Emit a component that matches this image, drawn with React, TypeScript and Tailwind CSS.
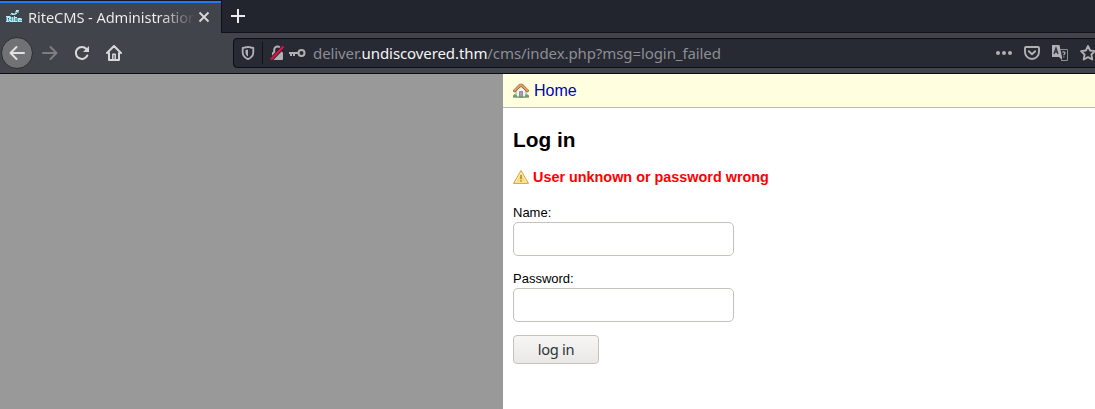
import React from "react";

function SiteIcon() {
  return (
    <svg width="16" height="16" viewBox="0 0 16 16" shapeRendering="crispEdges">
      <path fill="#5fa6b5" d="M0 7h16v6H0zM4 4h6v2H4zM9 2h4v2H9z" />
      <path fill="#b5e8f2" d="M0 7h4v1h1v2H4v1h1v1h1v1H4v-1H3v-2H2v2h1v1H0v-1h1V8H0zM6 8h1v4h1v1H5v-1h1zM8 7h1v1h2v1H9v3h2v1H8zM12 9h3v1h1v1h-3v1h3v1h-4zM10 1h3v1h-1v1h-2zM5 4h2v1h2v1H6V5H5zM9 4h2v1H9z" />
      <path fill="#42444b" d="M5 7h3v1H5zM9 7h7v1H9zM11 8h5v1h-5zM4 4h1v1H4zM2 9h1v1H2z" />
    </svg>
  );
}

function HouseIcon() {
  return (
    <svg width="16" height="16" viewBox="0 0 16 16">
      <path d="M3 7.500L8 3.500l5 4V14H3z" fill="#f2f2f2" stroke="#8b8b8b" strokeWidth=".8" />
      <path d="M6.500 14V8.500h3V14z" fill="#a3a3a3" stroke="#777" strokeWidth=".7" />
      <path d="M1.600 7.700L7 2.300h2l5.400 5.400" fill="none" stroke="#91562a" strokeWidth="3" strokeLinecap="round" strokeLinejoin="round" />
      <path d="M1.600 7.500L7 2.200h2l5.400 5.300" fill="none" stroke="#dda066" strokeWidth="2" strokeLinecap="round" strokeLinejoin="round" />
      <path d="M0 14v-1.500L1.500 11 4 12.200V14zM12 14v-2l2-1 2 1.500V14z" fill="#69ad58" />
      <path d="M0 14.200h16" stroke="#6b865e" strokeWidth=".8" />
    </svg>
  );
}

function WarningIcon() {
  return (
    <svg className="relative -top-px" width="16" height="16" viewBox="0 0 16 16">
      <path d="M8 1.500L15.500 14.400H.500z" fill="#f8dc83" stroke="#d5a33a" strokeLinejoin="round" />
      <path d="M8 3.600L13.500 13.200h-11z" fill="none" stroke="#fff0b5" strokeWidth=".8" />
      <path d="M8 6v4.300M8 11.300v1.400" stroke="#b08a32" strokeWidth="1.600" />
    </svg>
  );
}

function Navigation() {
  return (
    <div className="flex w-[233px] shrink-0 items-center pl-px">
      <button aria-label="Back" className="flex h-8 w-8 items-center justify-center rounded-full border border-[#2c2d31] bg-[#717276] text-[#e1e1e2]">
        <svg width="16" height="16" viewBox="0 0 16 16" fill="none" stroke="currentColor" strokeWidth="2" strokeLinecap="round" strokeLinejoin="round"><path d="M15 8H1.500M7.500 2L1.500 8l6 6" /></svg>
      </button>
      <svg className="ml-[9px] text-[#7d7e82]" width="16" height="16" viewBox="0 0 16 16" fill="none" stroke="currentColor" strokeWidth="2" strokeLinecap="round" strokeLinejoin="round"><path d="M1 8h13.500M8.500 2l6 6-6 6" /></svg>
      <svg className="ml-4 text-[#d8d8da]" width="16" height="16" viewBox="0 0 16 16" fill="none" stroke="currentColor" strokeWidth="2" strokeLinecap="round"><path d="M13.300 10.500A6 6 0 1 1 12.400 4" /><path d="M15 1v6H9z" fill="currentColor" stroke="none" /></svg>
      <svg className="ml-4 text-[#d8d8da]" width="16" height="16" viewBox="0 0 16 16" fill="none" stroke="currentColor" strokeWidth="2" strokeLinecap="round" strokeLinejoin="round"><path d="M1 8l7-7 7 7M3 8v7h10V8" /><path d="M6.800 14V9.300h2.400V14" strokeWidth="1.500" /></svg>
    </div>
  );
}

function AddressBar() {
  return (
    <div className="flex h-[30px] w-[880px] shrink-0 items-center rounded-[4px] border border-[#0d0e13] bg-[#272933] pl-[7px] text-[#b1b1b3]">
      <svg width="14" height="16" viewBox="0 0 14 16" fill="none" stroke="currentColor" strokeWidth="1.800"><path d="M7 1.900L12.300 3v4.500c0 3.200-2.200 5.200-5.300 6.700C3.900 12.700 1.700 10.700 1.700 7.500V3z" strokeLinejoin="round" /><path d="M7 4.500L4.500 5v2.500c0 1.700.8 3 2.500 4z" fill="currentColor" stroke="none" /></svg>
      <span className="ml-[7px] mr-[7px] h-[22px] w-px bg-[#11121a]" />
      <svg width="15" height="16" viewBox="0 0 15 16"><rect x="2" y="7" width="11" height="8" rx="1" fill="currentColor" /><path d="M4.200 7V4.700a3.300 3.300 0 0 1 6.600 0V7" fill="none" stroke="currentColor" strokeWidth="2" /><path d="M1 14.500L13.500 1.500" stroke="#272933" strokeWidth="4" /><path d="M1 14.500L13.500 1.500" stroke="#f00b49" strokeWidth="2" /></svg>
      <svg className="ml-[4px]" width="17" height="16" viewBox="0 0 17 16" fill="none" stroke="currentColor" strokeWidth="2"><circle cx="12.500" cy="8" r="3" /><path d="M0 8h9.500M2 8v3M5 8v3" /></svg>
      <span className="ml-[7px] w-[409px] shrink-0 whitespace-nowrap font-['Noto_Sans',sans-serif] text-[15px] leading-5 tracking-[-0.09px] text-[#8d8e93]">deliver.<span className="text-[#f5f5f6]">undiscovered.thm</span>/cms/index.php?msg=login_failed</span>
      <div className="ml-[274px] flex shrink-0 items-center gap-3">
        <svg width="16" height="16" viewBox="0 0 16 16" fill="currentColor"><circle cx="2" cy="8" r="2" /><circle cx="8" cy="8" r="2" /><circle cx="14" cy="8" r="2" /></svg>
        <svg width="16" height="16" viewBox="0 0 16 16" fill="none" stroke="currentColor" strokeWidth="1.900" strokeLinecap="round" strokeLinejoin="round"><path d="M2 2h12c.6 0 1 .4 1 1v4A7 7 0 0 1 1 7V3c0-.6.4-1 1-1zM4.800 6.200L8 9.300l3.200-3.100" /></svg>
        <svg width="16" height="16" viewBox="0 0 16 16"><path d="M8.500 4.500h7v11H9" fill="none" stroke="#8d8e92" strokeWidth="1" /><path d="M0 0h7.500L10 12H0z" fill="currentColor" /><path d="M2 9l2-6 2 6M2.700 7h2.600" fill="none" stroke="#343640" strokeWidth="1.300" /><path d="M7 12h3v3z" fill="currentColor" /><path d="M10.500 7.500c0-1 2.500-1 2.500.5 0 1-1.200 1-1.200 2.200M11.800 11.500v1" fill="none" stroke="currentColor" strokeWidth="1.200" /></svg>
        <svg width="16" height="16" viewBox="0 0 16 16" fill="none" stroke="currentColor" strokeWidth="1.800" strokeLinejoin="round"><path d="M8 1l2.100 4.500 4.900.6-3.600 3.400.9 5L8 12.100l-4.300 2.400.9-5L1 6.100l4.900-.6z" /></svg>
      </div>
    </div>
  );
}

export default function App() {
  return (
    <div className="flex h-[409px] w-full flex-col overflow-hidden bg-white font-['Liberation_Sans',sans-serif] text-black">
      <header className="h-[74px] shrink-0 border-b border-[#0b0c10] bg-[#42444b]">
        <div className="flex h-[33px] bg-[#23252e]">
          <div className="flex h-[33px] w-[221px] flex-col border-t border-[#17181e] bg-[#42444b]">
            <div className="h-[2px] bg-[#2878ef]" />
            <div className="flex h-[27px] items-center pl-[6px]">
              <SiteIcon />
              <span className="ml-[6px] w-[170px] whitespace-nowrap bg-[linear-gradient(to_right,#f0f0f1_132px,transparent_167px)] bg-clip-text font-['Noto_Sans',sans-serif] text-[14.67px] leading-[22px] tracking-[-0.1px] text-transparent">RiteCMS - Administration</span>
              <svg className="text-[#dadadb]" width="12" height="12" viewBox="0 0 12 12"><path d="M1.500 1.500l9 9M10.500 1.500l-9 9" stroke="currentColor" strokeWidth="1.800" /></svg>
            </div>
          </div>
          <div className="flex h-[33px] grow items-center border-b border-l border-[#11121a] pl-[9px]">
            <svg width="14" height="14" viewBox="0 0 14 14" fill="none" stroke="#ededee" strokeWidth="2"><path d="M7 0v14M0 7h14" /></svg>
          </div>
        </div>
        <div className="flex h-10 items-center overflow-hidden"><Navigation /><AddressBar /></div>
      </header>
      <main className="flex grow">
        <aside className="w-[503px] shrink-0 bg-[#999]" />
        <section className="grow">
          <nav className="flex h-[34px] items-center gap-[5px] border-b border-[#bababa] bg-[#ffffe0] pl-[10px]">
            <HouseIcon /><a href="#" className="text-base leading-5 text-[#0000c0]">Home</a>
          </nav>
          <div className="flex flex-col items-start pl-[10px]">
            <h1 className="mt-5 text-[20.8px] font-bold leading-6">Log in</h1>
            <p className="mt-4 flex h-5 items-center gap-1 text-[14.4px] font-bold text-[#ff0000]"><WarningIcon />User unknown or password wrong</p>
            <form className="flex flex-col items-start" onSubmit={(event) => event.preventDefault()}>
              <label htmlFor="name" className="mt-[17px] h-[17px] text-[13px] leading-4">Name:</label>
              <input id="name" className="h-[34px] w-[221px] rounded-[5px] border border-[#c5c1bd] bg-white px-2 outline-none" />
              <label htmlFor="password" className="mt-[15px] h-[17px] text-[13px] leading-4">Password:</label>
              <input id="password" type="password" className="h-[34px] w-[221px] rounded-[5px] border border-[#c5c1bd] bg-white px-2 outline-none" />
              <button className="mt-[13px] flex h-[29px] w-[86px] items-start justify-center rounded-[4px] border border-[#c5c1bd] bg-gradient-to-b from-[#f7f6f5] to-[#eae8e6] pt-[3px] font-['Noto_Sans',sans-serif] text-[14.67px] leading-5 tracking-[-0.3px] text-[#2e3436]">log in</button>
            </form>
          </div>
        </section>
      </main>
    </div>
  );
}
